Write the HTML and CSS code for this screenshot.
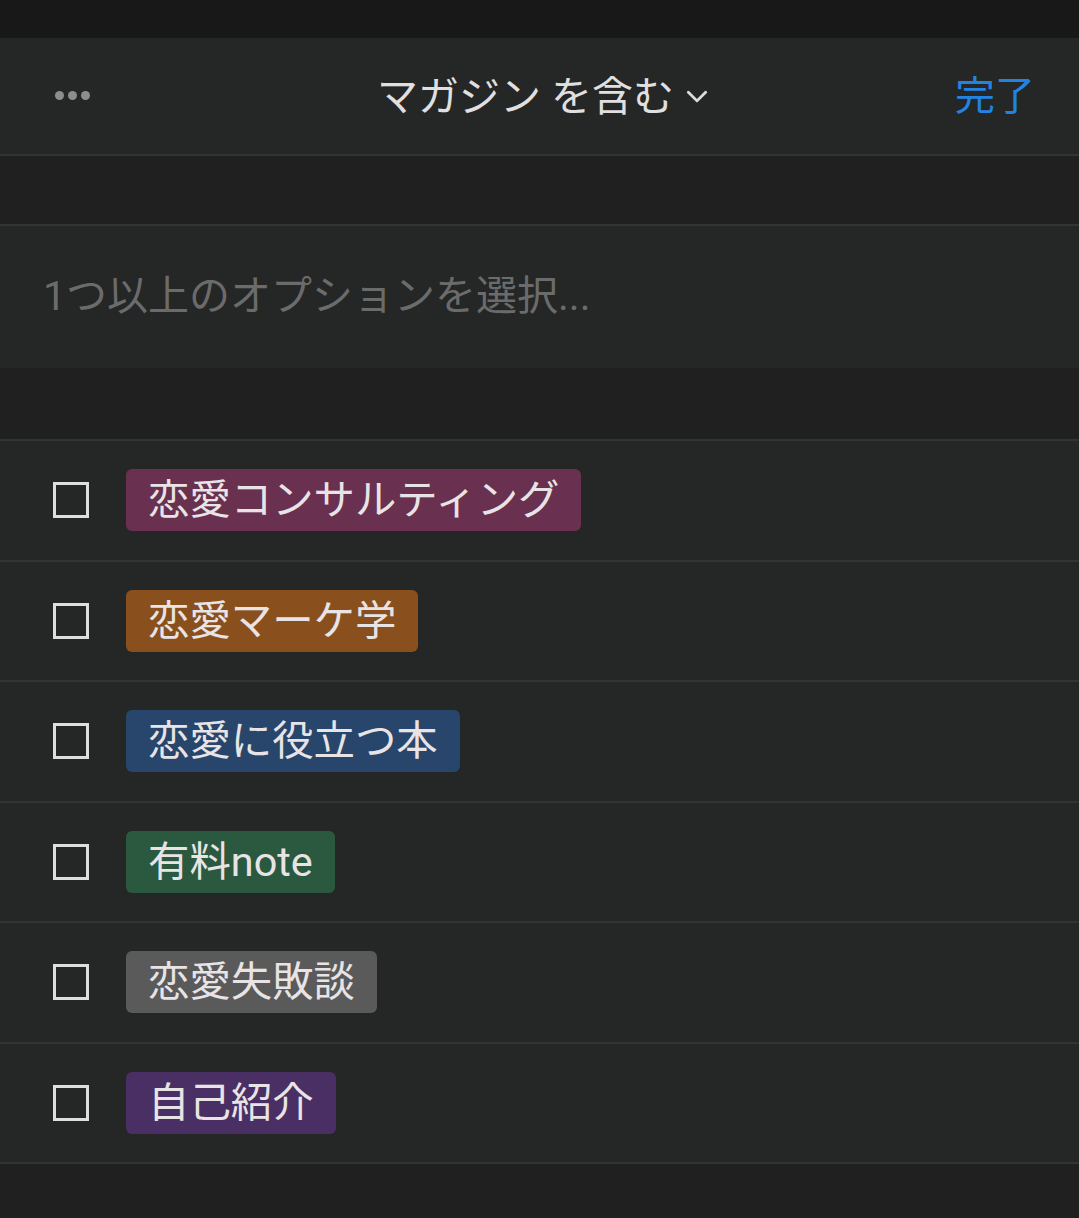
FILE: index.html
```html
<!DOCTYPE html>
<html lang="ja">
<head>
<meta charset="utf-8">
<link rel="stylesheet" href="styles.css">
</head>
<body>
<div class="status"></div>
<header class="header">
  <div class="more"><span></span><span></span><span></span></div>
  <div class="title">マガジン を含む
    <svg class="chev" viewBox="0 0 24 24" width="26" height="26"><path d="M4 8.5 L12 16.5 L20 8.5" fill="none" stroke="#dcdcdc" stroke-width="2.6" stroke-linecap="round" stroke-linejoin="round"/></svg>
  </div>
  <div class="done">完了</div>
</header>
<div class="gap gap1"></div>
<div class="input">1つ以上のオプションを選択...</div>
<div class="gap gap2"></div>
<ul class="list">
  <li class="row"><span class="box"></span><span class="tag t-pink">恋愛コンサルティング</span></li>
  <li class="row"><span class="box"></span><span class="tag t-orange">恋愛マーケ学</span></li>
  <li class="row"><span class="box"></span><span class="tag t-blue">恋愛に役立つ本</span></li>
  <li class="row"><span class="box"></span><span class="tag t-green">有料note</span></li>
  <li class="row"><span class="box"></span><span class="tag t-gray">恋愛失敗談</span></li>
  <li class="row"><span class="box"></span><span class="tag t-purple">自己紹介</span></li>
</ul>
</body>
</html>
```
FILE: styles.css
```css
* { box-sizing: border-box; }
html, body { margin: 0; padding: 0; }
body {
  background: #202020;
  font-family: Roboto, "Noto Sans CJK JP", "Noto Sans", sans-serif;
  color: #e3e3e3;
  width: 1079px;
  height: 1218px;
  overflow: hidden;
}
.status { height: 38px; background: #181818; }
.header {
  height: 118px;
  background: #252626;
  border-bottom: 2px solid #323333;
  display: flex;
  align-items: center;
  justify-content: space-between;
  padding: 0 44px 6px 55px;
  position: relative;
}
.more { display: flex; gap: 4px; align-items: center; width: 37px; margin-top: 4px; }
.more span { width: 9px; height: 9px; border-radius: 50%; background: #8e8c90; }
.title {
  position: absolute;
  left: 0; right: 0;
  top: 0; bottom: 0;
  display: flex;
  align-items: center;
  justify-content: center;
  font-size: 41px;
  color: #e0e0e0;
  pointer-events: none;
  padding: 0 0 6px 8px;
}
.chev { margin-left: 10px; margin-top: 6px; }
.done { font-size: 40px; color: #2383e2; }
.gap1 { height: 70px; border-bottom: 2px solid #323333; }
.input {
  height: 142px;
  background: #252626;
  display: flex;
  align-items: center;
  padding-left: 43px;
  font-size: 41px;
  color: #6b6b6b;
  padding-bottom: 10px;
}
.gap2 { height: 73px; border-bottom: 2px solid #323333; }
.list { list-style: none; margin: 0; padding: 0; }
.row {
  height: 120.5px;
  background: #252626;
  border-bottom: 2px solid #323333;
  display: flex;
  align-items: center;
  padding-left: 53px;
}
.box {
  width: 36px; height: 36px;
  border: 3px solid #dedede;
  margin-right: 37px;
  flex: none;
}
.tag {
  height: 62px;
  border-radius: 6px;
  padding: 0 22px;
  font-size: 41.4px;
  line-height: 62px;
  color: #e8e4e6;
  white-space: nowrap;
}
.t-pink { background: #69304f; }
.t-orange { background: #89501e; }
.t-blue { background: #28456c; }
.t-green { background: #2b593f; }
.t-gray { background: #5a5a5a; }
.t-purple { background: #492f64; }
```
